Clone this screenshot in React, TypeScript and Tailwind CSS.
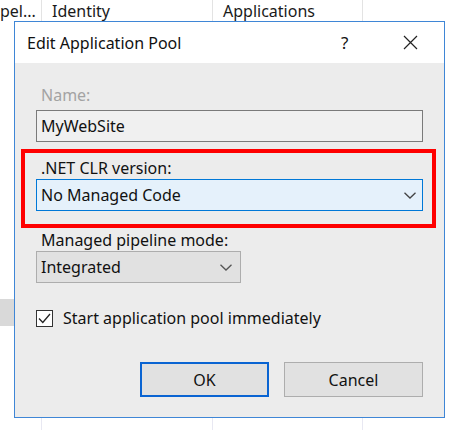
// Edit Application Pool — IIS dialog over the app pools list view.

const font = { fontFamily: '"Segoe UI", "Noto Sans", "Open Sans", sans-serif' };

function Chevron({ color = '#444' }: { color?: string }) {
  return (
    <svg width="12" height="7" viewBox="0 0 12 7" fill="none">
      <path d="M0.5 0.8 L6 6 L11.5 0.8" stroke={color} strokeWidth="1.3" />
    </svg>
  );
}

function ListBackground() {
  return (
    <div className="flex flex-col h-[430px] bg-white text-[16px] text-[#1a1a1a]" style={font}>
      <div className="flex h-[24px] shrink-0">
        <div className="w-[42px] border-r border-[#e3e3e3] leading-[22px] overflow-hidden whitespace-nowrap">pel...</div>
        <div className="w-[171px] border-r border-[#e3e3e3] pl-[10px] leading-[22px]">Identity</div>
        <div className="w-[150px] border-r border-[#e3e3e3] pl-[10px] leading-[22px]">Applications</div>
        <div className="flex-1" />
      </div>
      <div className="flex flex-1">
        <div className="w-[42px] border-r border-[#e8e8f2] flex flex-col">
          <div className="h-[275px]" />
          <div className="h-[27px] bg-[#d9d9d9]" />
        </div>
        <div className="w-[171px] border-r border-[#e8e8f2]" />
        <div className="w-[150px] border-r border-[#e8e8f2]" />
        <div className="flex-1" />
      </div>
    </div>
  );
}

function Dialog() {
  return (
    <div
      className="absolute left-[14px] top-[21px] w-[431px] h-[397px] border border-[#3f86d6] flex flex-col text-[16px] text-[#111]"
      style={font}
    >
      {/* Title bar */}
      <div className="h-[41px] shrink-0 bg-white flex items-center pl-[12px] pr-[26px]">
        <span className="flex-1">Edit Application Pool</span>
        <span className="w-[10px] mr-[52px] text-[17px]">?</span>
        <svg width="15" height="15" viewBox="0 0 15 15">
          <path d="M1 1 L14 14 M14 1 L1 14" stroke="#222" strokeWidth="1.2" />
        </svg>
      </div>

      {/* Body */}
      <div className="flex-1 bg-[#ececec] px-[21px] pt-[22px] flex flex-col">
        <div className="pl-[5px] leading-[20px] text-[#a3a3a3]">Name:</div>
        <div className="mt-[5px] h-[32px] border border-[#7a7a7a] bg-[#f0f0f0] pl-[4px] flex items-center">
          MyWebSite
        </div>

        <div className="mt-[7px] -ml-[15px] -mr-[13px] border-4 border-[#ff0000] pl-[11px] pr-[9px] pt-[5px] pb-[13px]">
          <div className="pl-[5px] leading-[20px]">.NET CLR version:</div>
          <div className="mt-[1px] h-[32px] border border-[#0078d7] bg-[#e5f1fb] pl-[4px] pr-[6px] flex items-center justify-between">
            <span>No Managed Code</span>
            <Chevron />
          </div>
        </div>

        <div className="mt-[2px] pl-[5px] leading-[20px]">Managed pipeline mode:</div>
        <div className="mt-[1px] w-[205px] h-[32px] border border-[#adadad] bg-[#e1e1e1] pl-[4px] pr-[8px] flex items-center justify-between">
          <span>Integrated</span>
          <Chevron color="#555" />
        </div>

        <div className="mt-[23px] flex items-center gap-[10px]">
          <div className="w-[17px] h-[17px] border border-[#333] bg-white flex items-center justify-center">
            <svg width="13" height="11" viewBox="0 0 13 11" fill="none">
              <path d="M1 5.5 L4.8 9.5 L12 1" stroke="#222" strokeWidth="1.3" />
            </svg>
          </div>
          <span>Start application pool immediately</span>
        </div>

        <div className="mt-[32px] flex justify-end gap-[15px]">
          <button className="w-[129px] h-[35px] border-2 border-[#0a64d2] bg-[#e1e1e1]">OK</button>
          <button className="w-[139px] h-[35px] border border-[#adadad] bg-[#e1e1e1]">Cancel</button>
        </div>
      </div>
    </div>
  );
}

export default function App() {
  return (
    <div className="relative w-[460px] h-[430px] overflow-hidden">
      <ListBackground />
      <Dialog />
    </div>
  );
}
